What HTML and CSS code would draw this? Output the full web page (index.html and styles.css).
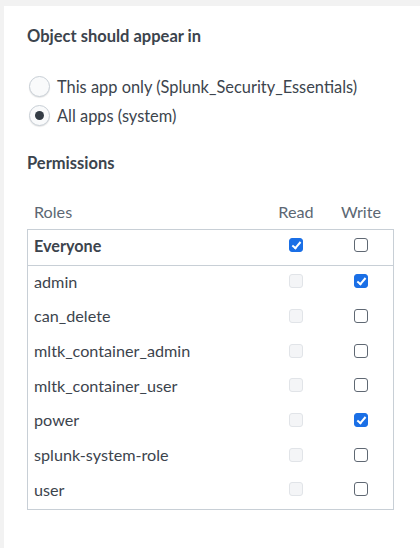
FILE: index.html
```html
<!DOCTYPE html>
<html>
<head>
<meta charset="utf-8">
<link rel="stylesheet" href="styles.css">
</head>
<body>
<div class="panel">
  <h2 class="title">Object should appear in</h2>
  <div class="radios">
    <label class="radio"><span class="dot"></span>This app only (Splunk_Security_Essentials)</label>
    <label class="radio"><span class="dot on"></span>All apps (system)</label>
  </div>
  <h2 class="title perm">Permissions</h2>
  <div class="head">
    <span class="role">Roles</span>
    <span class="col read">Read</span>
    <span class="col write">Write</span>
  </div>
  <div class="table">
    <div class="row everyone"><span class="role">Everyone</span><span class="col read"><i class="cb checked"></i></span><span class="col write"><i class="cb"></i></span></div>
    <div class="body">
      <div class="row"><span class="role">admin</span><span class="col read"><i class="cb dis"></i></span><span class="col write"><i class="cb checked"></i></span></div>
      <div class="row"><span class="role">can_delete</span><span class="col read"><i class="cb dis"></i></span><span class="col write"><i class="cb"></i></span></div>
      <div class="row"><span class="role">mltk_container_admin</span><span class="col read"><i class="cb dis"></i></span><span class="col write"><i class="cb"></i></span></div>
      <div class="row"><span class="role">mltk_container_user</span><span class="col read"><i class="cb dis"></i></span><span class="col write"><i class="cb"></i></span></div>
      <div class="row"><span class="role">power</span><span class="col read"><i class="cb dis"></i></span><span class="col write"><i class="cb checked"></i></span></div>
      <div class="row"><span class="role">splunk-system-role</span><span class="col read"><i class="cb dis"></i></span><span class="col write"><i class="cb"></i></span></div>
      <div class="row"><span class="role">user</span><span class="col read"><i class="cb dis"></i></span><span class="col write"><i class="cb"></i></span></div>
    </div>
  </div>
</div>
</body>
</html>
```
FILE: styles.css
```css
html, body { margin: 0; padding: 0; }
body {
  background: #f2f2f2;
  font-family: Lato, "Open Sans", sans-serif;
  color: #3c444d;
  width: 420px;
  height: 548px;
  overflow: hidden;
}
.panel {
  background: #fff;
  margin: 6px 0 0 4px;
  height: 542px;
  padding: 0 26px 0 23px;
  box-sizing: border-box;
}
.title {
  margin: 0;
  padding-top: 20px;
  font-size: 16.5px;
  font-weight: 700;
  line-height: 20px;
  color: #3c444d;
}
.radios {
  margin-top: 30px;
  display: flex;
  flex-direction: column;
  gap: 8px;
}
.radio {
  display: flex;
  align-items: center;
  font-size: 16.4px;
  line-height: 21px;
  color: #3c444d;
  margin-left: 2px;
}
.dot {
  width: 21px;
  height: 21px;
  border-radius: 50%;
  border: 1px solid #c8cfd6;
  background: #f9fafb;
  margin-right: 7px;
  box-sizing: border-box;
  display: flex;
  align-items: center;
  justify-content: center;
  box-shadow: 0 1px 1px rgba(0,0,0,0.1);
}
.dot.on::after {
  content: "";
  width: 9px;
  height: 9px;
  border-radius: 50%;
  background: #343c45;
}
.perm { padding-top: 27px; }
.head {
  display: flex;
  margin-top: 29px;
  height: 20px;
  line-height: 20px;
  font-size: 16.2px;
  color: #5c6773;
  padding: 0 1px 0 7px;
}
.table {
  margin-top: 7px;
  border: 1px solid #c8cfd6;
}
.row {
  display: flex;
  align-items: center;
  font-size: 16.2px;
  height: 34.67px;
  padding: 0 0 0 6px;
}
.head .role, .row .role { flex: 1; }
.col {
  display: flex;
  justify-content: center;
}
.col.read { width: 66px; }
.col.write { width: 64px; }
.row.everyone {
  font-weight: 700;
  height: 36px;
  box-sizing: border-box;
  padding-bottom: 5px;
  border-bottom: 1px solid #c8cfd6;
}
.body { margin-top: -2px; padding-bottom: 2px; }
.cb {
  width: 14px;
  height: 14px;
  box-sizing: border-box;
  border: 1px solid #5f6873;
  border-radius: 3px;
  background: #fff;
  display: block;
  position: relative;
}
.cb.dis {
  border-color: #e1e4e8;
  background: #f4f5f7;
}
.cb.checked {
  background: #1a6fe6;
  border-color: #1a6fe6;
}
.cb.checked::after {
  content: "";
  position: absolute;
  left: 4px;
  top: 1px;
  width: 3px;
  height: 7px;
  border: solid #fff;
  border-width: 0 2px 2px 0;
  transform: rotate(40deg);
}
```
